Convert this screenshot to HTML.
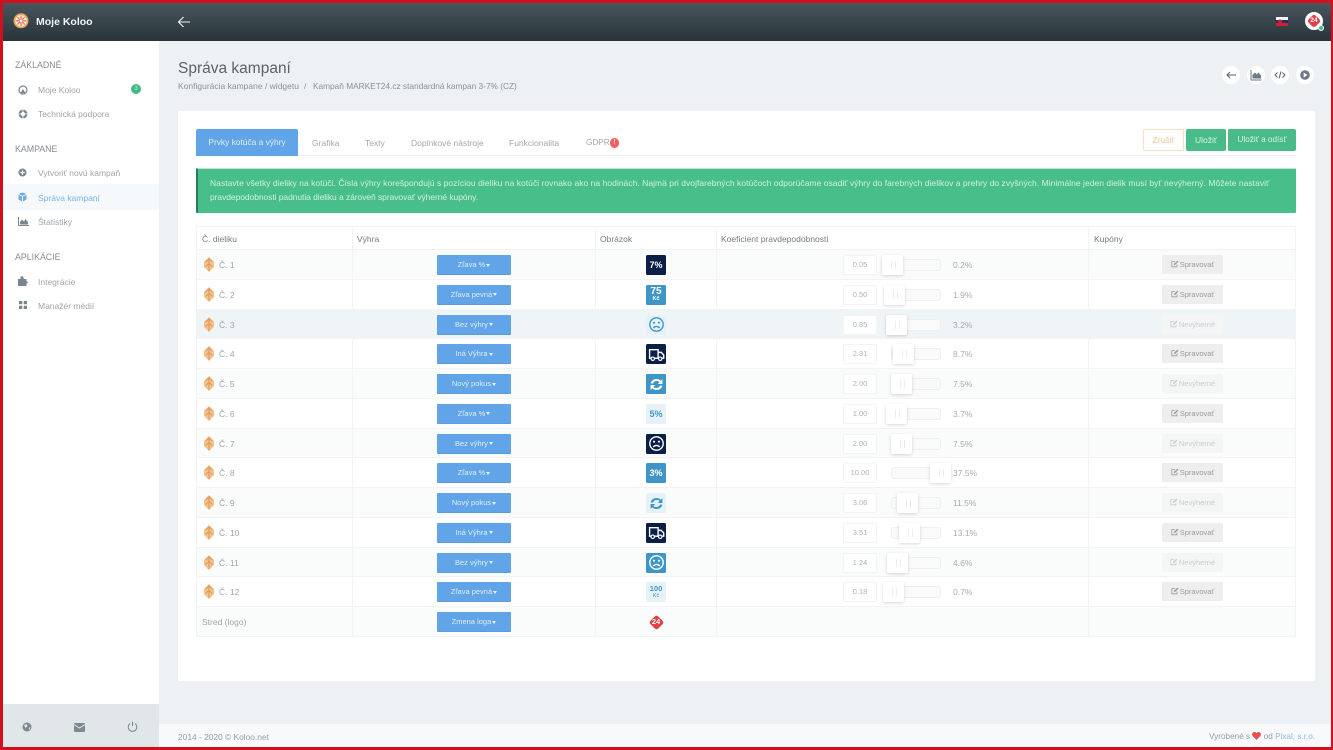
<!DOCTYPE html>
<html lang="sk"><head><meta charset="utf-8"><title>Správa kampaní</title>
<style>
*{box-sizing:border-box}
html,body{margin:0;padding:0}
body{width:1333px;height:750px;overflow:hidden;position:relative;background:#eef1f3;font-family:"Liberation Sans",sans-serif;font-size:8.5px;color:#8d9499;filter:blur(.3px)}
.a{position:absolute;white-space:nowrap}
#frame{position:absolute;left:0;top:0;width:1333px;height:750px;border:solid #d0101f;border-width:3px 2px 3px 3px;pointer-events:none;z-index:9}
#top{left:0;top:0;width:1333px;height:41px;background:linear-gradient(#4b585f,#28333a)}
#side{left:0;top:41px;width:159px;height:709px;background:#fff}
.h{left:15px;font-size:8.8px;color:#858d93;line-height:12px}
.n{left:38px;font-size:8.5px;color:#9fa5a9;line-height:12px}
.tab{top:137px;font-size:8.5px;color:#a2a8ac;line-height:12px}
.r{position:absolute;left:196px;width:1100px;height:29.75px;border-bottom:1px solid #f1f3f4;border-left:1px solid #f1f3f4;border-right:1px solid #f1f3f4}
.v{position:absolute;top:0;height:100%;width:1px;background:#f1f3f4}
.l{position:absolute;left:22px;top:9px;font-size:8.5px;line-height:12px;color:#a0a6aa;white-space:nowrap}
.w{position:absolute;left:6px;top:7px;width:12px;height:15px}
.d{position:absolute;left:240px;top:5px;width:74px;height:19px;background:#61a5e8;border-radius:1px;color:#dfeefb;font-size:7.5px;line-height:19px;text-align:center;white-space:nowrap;box-shadow:0 1px 0 #5a9bdc}
.d i{display:inline-block;border:2.5px solid transparent;border-top:3px solid #eaf3fc;border-bottom:0;vertical-align:middle;margin-left:-1px}
.im{position:absolute;left:449px;top:5px;width:20px;height:20px;border-radius:1.5px;color:#fff;text-align:center;font-weight:bold;font-size:9px;line-height:20px;white-space:nowrap}
.im svg{position:absolute;left:1.5px;top:1.5px;width:17px;height:17px}
.im b{display:block;font-size:10px;line-height:9px;padding-top:2px}
.im u{display:block;text-decoration:none;font-size:5.5px;line-height:6px}
.nv{background:#0b1e48}.bl{background:#3f96c6}.lt{background:#e6f2f8;color:#3f96c6}
.in{position:absolute;left:646px;top:5px;width:34px;height:20px;border:1px solid #f3f4f5;background:#fff;font-size:7.5px;color:#adb2b5;text-align:center;line-height:18px;overflow:hidden}
.t{position:absolute;left:694px;top:9px;width:50px;height:12px;border:1px solid #efefef;border-radius:3px;background:#fafafa}
.k{position:absolute;top:5px;width:21px;height:20px;background:#fff;border-radius:2px;box-shadow:0 1px 3px rgba(0,0,0,.16)}
.k:after{content:"";position:absolute;left:9px;top:6px;width:3px;height:8px;border-left:1px solid #ececec;border-right:1px solid #ececec}
.p{position:absolute;left:756px;top:9px;font-size:8.5px;line-height:12px;color:#a8adb0}
.s{position:absolute;left:965px;top:5px;width:61px;height:19px;background:#eeeeee;color:#979ca0;font-size:7.5px;line-height:19px;text-align:center;white-space:nowrap;border-radius:1px}
.s.o{background:#f4f5f5;color:#c8cccf}
.s svg{width:8px;height:8px;vertical-align:-1px;margin-right:1px}
.c{top:66px;width:18px;height:18px;border-radius:50%;background:#fff}
.c svg{position:absolute;left:3px;top:3px;width:12px;height:12px}
.bt{top:129px;height:22px;border-radius:2px;text-align:center;font-size:8.5px;line-height:22px;background:#48bb88;color:#d8f3e5}
.th{position:absolute;top:6px;font-size:8.5px;line-height:12px;color:#757c81;white-space:nowrap}
</style></head><body>
<svg width="0" height="0" style="position:absolute">
<defs>
<symbol id="wedge" viewBox="0 0 12 15"><path d="M6 0 11 5V10L6 15 1 10V5Z" fill="#f3c38e"/><path d="M6 1v13M2.500 5 6 2l3.500 3M2.500 9.500 6 6.500l3.500 3" stroke="#e09a5c" stroke-width="1.100" fill="none"/></symbol>
<symbol id="sad" viewBox="0 0 16 16"><circle cx="8" cy="8" r="6.300" fill="none" stroke="currentColor" stroke-width="1.300"/><circle cx="5.700" cy="6.300" r="1" fill="currentColor"/><circle cx="10.300" cy="6.300" r="1" fill="currentColor"/><path d="M5 11.300C6.500 9.300 9.500 9.300 11 11.300" fill="none" stroke="currentColor" stroke-width="1.300"/></symbol>
<symbol id="truck" viewBox="0 0 16 16"><path d="M1.500 3.500H9.500V11.500H1.500ZM9.500 6H12.500L14.800 8.500V11.500H9.500" fill="none" stroke="currentColor" stroke-width="1.300"/><circle cx="4.500" cy="12" r="1.600" fill="#0b1e48" stroke="currentColor" stroke-width="1.100"/><circle cx="11.500" cy="12" r="1.600" fill="#0b1e48" stroke="currentColor" stroke-width="1.100"/></symbol>
<symbol id="sync" viewBox="0 0 16 16"><path d="M2.500 7C3 4.500 5.300 2.800 8 2.800c1.700 0 3 .7 4 1.700L13.600 3V7.500H9.200L11 5.700C10.300 5 9.200 4.700 8 4.700 6.500 4.700 5.300 5.600 4.800 7ZM13.500 9C13 11.500 10.700 13.200 8 13.200c-1.700 0-3-.7-4-1.700L2.400 13V8.500H6.800L5 10.300C5.700 11 6.800 11.300 8 11.300c1.500 0 2.700-.9 3.200-2.300Z" fill="currentColor"/></symbol>
<symbol id="edit" viewBox="0 0 10 10"><path d="M7.500 5.500V8.500H1V2H5" fill="none" stroke="currentColor" stroke-width="1"/><path d="M3.500 6.500 4 4.500 8 .8 9.300 2 5.300 6Z" fill="currentColor"/></symbol>
</defs></svg>

<div class="a" id="top"></div>
<svg class="a" style="left:13px;top:13px" width="16" height="16" viewBox="0 0 16 16"><circle cx="8" cy="7.800" r="7.500" fill="#e9a45c"/><circle cx="8" cy="7.800" r="5.800" fill="#fbe9dc"/><path d="M8 2.500v10.600M2.700 7.800h10.600M4.300 4.100l7.400 7.400M11.700 4.100l-7.400 7.400" stroke="#e27c5e" stroke-width="1.300"/><circle cx="8" cy="7.800" r="1.300" fill="#fff"/></svg>
<div class="a" style="left:36px;top:15px;font-size:10.500px;font-weight:bold;color:#f2f4f5;line-height:14px">Moje Koloo</div>
<svg class="a" style="left:177px;top:15px" width="14" height="14" viewBox="0 0 14 14"><path d="M13 7H1.500M6.500 2 1.500 7l5 5" fill="none" stroke="#f2f4f5" stroke-width="1.100"/></svg>
<svg class="a" style="left:1276px;top:17px" width="12" height="9" viewBox="0 0 12 9"><rect width="12" height="3" fill="#f4f4f4"/><rect y="3" width="12" height="3" fill="#1c2f7a"/><rect y="6" width="12" height="3" fill="#d21f2c"/><circle cx="4" cy="4.500" r="2" fill="#d21f2c"/></svg>
<div class="a" style="left:1305px;top:12px;width:18px;height:18px;border-radius:50%;background:#fff"></div>
<div class="a" style="left:1309px;top:16px;width:10px;height:10px;border-radius:2.500px;background:#de4246;transform:rotate(45deg)"></div>
<div class="a" style="left:1305px;top:16px;width:18px;text-align:center;font-size:6.500px;font-weight:bold;color:#fff;line-height:10px">24</div>
<div class="a" style="left:1318px;top:25px;width:6px;height:6px;border-radius:50%;background:#48bb88;border:1px solid #fff"></div>

<div class="a" id="side"></div>
<div class="a" style="left:3px;top:184px;width:156px;height:26px;background:#f6f9fb"></div>
<div class="a h" style="top:59px">ZÁKLADNÉ</div>
<div class="a h" style="top:143px">KAMPANE</div>
<div class="a h" style="top:251px">APLIKÁCIE</div>
<div class="a n" style="top:84px">Moje Koloo</div>
<div class="a n" style="top:108px">Technická podpora</div>
<div class="a n" style="top:167px">Vytvoriť novú kampaň</div>
<div class="a n" style="top:192px;color:#7eb2e6">Správa kampaní</div>
<div class="a n" style="top:216px">Štatistiky</div>
<div class="a n" style="top:276px">Integrácie</div>
<div class="a n" style="top:300px">Manažér médií</div>
<div class="a" style="left:131px;top:84px;width:10px;height:10px;border-radius:50%;background:#3fba84;color:#b8ecd2;font-size:6.500px;line-height:10px;text-align:center">3</div>
<svg class="a" style="left:18px;top:85px" width="10" height="10" viewBox="0 0 10 10"><circle cx="5" cy="5" r="4" fill="none" stroke="#7a868e" stroke-width="1.200"/><path d="M2.500 8 5 4 7.500 8Z" fill="#7a868e"/></svg>
<svg class="a" style="left:18px;top:109px" width="10" height="10" viewBox="0 0 10 10"><circle cx="5" cy="5" r="4.500" fill="#7a868e"/><circle cx="5" cy="5" r="2" fill="#fff"/><path d="M5 0v10M0 5h10" stroke="#fff" stroke-width=".8"/></svg>
<svg class="a" style="left:18px;top:168px" width="9" height="9" viewBox="0 0 9 9"><circle cx="4.500" cy="4.500" r="4" fill="#7a868e"/><path d="M2.300 4.500h4.400M4.500 2.300v4.400" stroke="#fff" stroke-width="1.200"/></svg>
<svg class="a" style="left:18px;top:192px" width="9" height="10" viewBox="0 0 9 10"><path d="M4.500 .5 8.500 2 4.500 3.700 .5 2Z" fill="#6fa9e2"/><path d="M.5 3 4 4.500V9.500L.5 7.500ZM8.500 3 5 4.500V9.500L8.500 7.500Z" fill="#6fa9e2"/></svg>
<svg class="a" style="left:18px;top:217px" width="11" height="9" viewBox="0 0 11 9"><path d="M.5 0V8.500H11" fill="none" stroke="#7a868e"/><path d="M2 7.500V5L4 2.500 6 4.500 7.500 2 10 5V7.500Z" fill="#7a868e"/></svg>
<svg class="a" style="left:18px;top:276px" width="10" height="10" viewBox="0 0 10 10"><path d="M0 3H2.500C2 1 3 .3 4 .3S6 1 5.500 3H8.500V5.500C10.500 5 10 8 8.500 7.200V10H0Z" fill="#7a868e"/></svg>
<svg class="a" style="left:19px;top:301px" width="8" height="8" viewBox="0 0 8 8"><path d="M0 0h3.300v3.300H0zM4.700 0H8v3.300H4.700zM0 4.700h3.300V8H0zM4.700 4.700H8V8H4.700z" fill="#7a868e"/></svg>
<div class="a" style="left:3px;top:704px;width:156px;height:44px;background:#e1e6e9"></div>
<svg class="a" style="left:22px;top:722px" width="10" height="10" viewBox="0 0 10 10"><circle cx="5" cy="5" r="4.500" fill="#7d8a94"/><path d="M2 3 4.500 2 5.500 4 3.500 6ZM6.500 6 8.500 5 7.500 8Z" fill="#e1e6e9"/></svg>
<svg class="a" style="left:74px;top:723px" width="11" height="9" viewBox="0 0 11 9"><rect width="11" height="9" rx="1" fill="#7d8a94"/><path d="M0 1.500 5.500 5 11 1.500" fill="none" stroke="#e1e6e9"/></svg>
<svg class="a" style="left:127px;top:721px" width="11" height="11" viewBox="0 0 11 11"><path d="M3 2.500a4.300 4.300 0 1 0 5 0" fill="none" stroke="#7d8a94" stroke-width="1"/><path d="M5.500 .5V5" stroke="#7d8a94" stroke-width="1"/></svg>

<div class="a" style="left:178px;top:59px;font-size:15.500px;line-height:20px;color:#5a6369">Správa kampaní</div>
<div class="a" style="left:178px;top:80px;font-size:8.500px;line-height:12px;color:#8a9298">Konfigurácia kampane / widgetu</div>
<div class="a" style="left:304px;top:80px;font-size:8.500px;line-height:12px;color:#8a9298">/</div>
<div class="a" style="left:313px;top:80px;font-size:8.300px;line-height:12px;color:#8a9298">Kampaň MARKET24.cz standardná kampan 3-7% (CZ)</div>
<div class="a c" style="left:1222px"><svg viewBox="0 0 12 12"><path d="M11 6H2M5 3 2 6l3 3" fill="none" stroke="#56626a" stroke-width="1"/></svg></div>
<div class="a c" style="left:1247px"><svg viewBox="0 0 12 12"><path d="M1 1V11H11.500" fill="none" stroke="#6e7a83"/><path d="M2.500 9.500V6L5 3.500 7 5.500 8.500 3.500 11 6.500V9.500Z" fill="#6e7a83"/></svg></div>
<div class="a c" style="left:1271px"><svg viewBox="0 0 12 12"><path d="M3.500 3.500 1 6l2.500 2.500M8.500 3.500 11 6 8.500 8.500M7 2.500 5 9.500" fill="none" stroke="#56626a" stroke-width="1"/></svg></div>
<div class="a c" style="left:1296px"><svg viewBox="0 0 12 12"><circle cx="6" cy="6" r="4.800" fill="#6e7a83"/><path d="M4.700 3.500 8.500 6 4.700 8.500Z" fill="#fff"/></svg></div>

<div class="a" style="left:178px;top:111px;width:1137px;height:570px;background:#fff"></div>
<div class="a" style="left:196px;top:155px;width:1100px;height:1px;background:#eef0f1"></div>
<div class="a" style="left:196px;top:129px;width:102px;height:27px;background:#61a5e8;border-radius:2px 2px 0 0;color:#e0eefa;font-size:8.400px;line-height:26px;text-align:center">Prvky kotúča a výhry</div>
<div class="a tab" style="left:312px">Grafika</div>
<div class="a tab" style="left:365px">Texty</div>
<div class="a tab" style="left:411px">Doplnkové nástroje</div>
<div class="a tab" style="left:509px">Funkcionalita</div>
<div class="a tab" style="left:586px;font-size:8.200px">GDPR</div>
<div class="a" style="left:610px;top:138px;width:9px;height:10px;border-radius:5px;background:#f0625f;color:#fff;font-size:7px;line-height:10px;text-align:center">!</div>
<div class="a bt" style="left:1143px;width:41px;background:#fff;border:1px solid #f6dfc4;color:#f0c49c;line-height:20px">Zrušiť</div>
<div class="a bt" style="left:1186px;width:40px">Uložiť</div>
<div class="a bt" style="left:1228px;width:68px;font-size:8.200px">Uložiť a odísť</div>

<div class="a" style="left:196px;top:168px;width:1100px;height:45px;background:#48bf8a;border-left:2px solid #2b7a58;border-top:1px solid #bfe8d4;border-radius:1px;color:#d2f0e0;font-size:8.500px;line-height:13.500px;padding:8px 0 0 12px"><span style="letter-spacing:.036px">Nastavte všetky dieliky na kotúči. Čísla výhry korešpondujú s pozíciou dieliku na kotúči rovnako ako na hodinách. Najmä pri dvojfarebných kotúčoch odporúčame osadiť výhry do farebných dielikov a prehry do zvyšných. Minimálne jeden dielik musí byť nevýherný. Môžete nastaviť</span><br><span style="letter-spacing:-.07px">pravdepodobnosti padnutia dieliku a zároveň spravovať výherné kupóny.</span></div>

<div class="r" style="top:226px;height:24px;border-top:1px solid #f1f3f4"><span class="v" style="left:155px"></span><span class="v" style="left:398px"></span><span class="v" style="left:519px"></span><span class="v" style="left:891px"></span>
<span class="th" style="left:5px">Č. dieliku</span><span class="th" style="left:160px">Výhra</span><span class="th" style="left:403px">Obrázok</span><span class="th" style="left:524px">Koeficient pravdepodobnosti</span><span class="th" style="left:897px">Kupóny</span></div>

<div class="r" style="top:250px;background:#fafbfb"><span class="v" style="left:155px"></span><span class="v" style="left:398px"></span><span class="v" style="left:519px"></span><span class="v" style="left:891px"></span>
<svg class="w"><use href="#wedge"/></svg><span class="l">Č. 1</span><span class="d">Zľava % <i></i></span><span class="im nv">7%</span><span class="in">0.05</span><span class="t"></span><span class="k" style="left:685px"></span><span class="p">0.2%</span><span class="s"><svg><use href="#edit"/></svg>Spravovať</span></div>

<div class="r" style="top:279.750px;background:#fff"><span class="v" style="left:155px"></span><span class="v" style="left:398px"></span><span class="v" style="left:519px"></span><span class="v" style="left:891px"></span>
<svg class="w"><use href="#wedge"/></svg><span class="l">Č. 2</span><span class="d">Zľava pevná <i></i></span><span class="im bl"><b>75</b><u>Kč</u></span><span class="in">0.50</span><span class="t"></span><span class="k" style="left:687px"></span><span class="p">1.9%</span><span class="s"><svg><use href="#edit"/></svg>Spravovať</span></div>

<div class="r" style="top:309.500px;background:#eff4f7"><span class="v" style="left:155px"></span><span class="v" style="left:398px"></span><span class="v" style="left:519px"></span><span class="v" style="left:891px"></span>
<svg class="w"><use href="#wedge"/></svg><span class="l">Č. 3</span><span class="d">Bez výhry <i></i></span><span class="im lt"><svg><use href="#sad"/></svg></span><span class="in">0.85</span><span class="t"></span><span class="k" style="left:689px"></span><span class="p">3.2%</span><span class="s o"><svg><use href="#edit"/></svg>Nevýherné</span></div>

<div class="r" style="top:339.250px;background:#fff"><span class="v" style="left:155px"></span><span class="v" style="left:398px"></span><span class="v" style="left:519px"></span><span class="v" style="left:891px"></span>
<svg class="w"><use href="#wedge"/></svg><span class="l">Č. 4</span><span class="d">Iná Výhra <i></i></span><span class="im nv"><svg><use href="#truck"/></svg></span><span class="in">2.31</span><span class="t"></span><span class="k" style="left:696px"></span><span class="p">8.7%</span><span class="s"><svg><use href="#edit"/></svg>Spravovať</span></div>

<div class="r" style="top:369px;background:#fafbfb"><span class="v" style="left:155px"></span><span class="v" style="left:398px"></span><span class="v" style="left:519px"></span><span class="v" style="left:891px"></span>
<svg class="w"><use href="#wedge"/></svg><span class="l">Č. 5</span><span class="d">Nový pokus <i></i></span><span class="im bl"><svg><use href="#sync"/></svg></span><span class="in">2.00</span><span class="t"></span><span class="k" style="left:694px"></span><span class="p">7.5%</span><span class="s o"><svg><use href="#edit"/></svg>Nevýherné</span></div>

<div class="r" style="top:398.750px;background:#fff"><span class="v" style="left:155px"></span><span class="v" style="left:398px"></span><span class="v" style="left:519px"></span><span class="v" style="left:891px"></span>
<svg class="w"><use href="#wedge"/></svg><span class="l">Č. 6</span><span class="d">Zľava % <i></i></span><span class="im lt">5%</span><span class="in">1.00</span><span class="t"></span><span class="k" style="left:689px"></span><span class="p">3.7%</span><span class="s"><svg><use href="#edit"/></svg>Spravovať</span></div>

<div class="r" style="top:428.500px;background:#fafbfb"><span class="v" style="left:155px"></span><span class="v" style="left:398px"></span><span class="v" style="left:519px"></span><span class="v" style="left:891px"></span>
<svg class="w"><use href="#wedge"/></svg><span class="l">Č. 7</span><span class="d">Bez výhry <i></i></span><span class="im nv"><svg><use href="#sad"/></svg></span><span class="in">2.00</span><span class="t"></span><span class="k" style="left:694px"></span><span class="p">7.5%</span><span class="s o"><svg><use href="#edit"/></svg>Nevýherné</span></div>

<div class="r" style="top:458.250px;background:#fff"><span class="v" style="left:155px"></span><span class="v" style="left:398px"></span><span class="v" style="left:519px"></span><span class="v" style="left:891px"></span>
<svg class="w"><use href="#wedge"/></svg><span class="l">Č. 8</span><span class="d">Zľava % <i></i></span><span class="im bl">3%</span><span class="in">10.00</span><span class="t"></span><span class="k" style="left:733px"></span><span class="p">37.5%</span><span class="s"><svg><use href="#edit"/></svg>Spravovať</span></div>

<div class="r" style="top:488px;background:#fafbfb"><span class="v" style="left:155px"></span><span class="v" style="left:398px"></span><span class="v" style="left:519px"></span><span class="v" style="left:891px"></span>
<svg class="w"><use href="#wedge"/></svg><span class="l">Č. 9</span><span class="d">Nový pokus <i></i></span><span class="im lt"><svg><use href="#sync"/></svg></span><span class="in">3.06</span><span class="t"></span><span class="k" style="left:700px"></span><span class="p">11.5%</span><span class="s o"><svg><use href="#edit"/></svg>Nevýherné</span></div>

<div class="r" style="top:517.750px;background:#fff"><span class="v" style="left:155px"></span><span class="v" style="left:398px"></span><span class="v" style="left:519px"></span><span class="v" style="left:891px"></span>
<svg class="w"><use href="#wedge"/></svg><span class="l">Č. 10</span><span class="d">Iná Výhra <i></i></span><span class="im nv"><svg><use href="#truck"/></svg></span><span class="in">3.51</span><span class="t"></span><span class="k" style="left:702px"></span><span class="p">13.1%</span><span class="s"><svg><use href="#edit"/></svg>Spravovať</span></div>

<div class="r" style="top:547.500px;background:#fafbfb"><span class="v" style="left:155px"></span><span class="v" style="left:398px"></span><span class="v" style="left:519px"></span><span class="v" style="left:891px"></span>
<svg class="w"><use href="#wedge"/></svg><span class="l">Č. 11</span><span class="d">Bez výhry <i></i></span><span class="im bl"><svg><use href="#sad"/></svg></span><span class="in">1.24</span><span class="t"></span><span class="k" style="left:690px"></span><span class="p">4.6%</span><span class="s o"><svg><use href="#edit"/></svg>Nevýherné</span></div>

<div class="r" style="top:577.250px;background:#fff"><span class="v" style="left:155px"></span><span class="v" style="left:398px"></span><span class="v" style="left:519px"></span><span class="v" style="left:891px"></span>
<svg class="w"><use href="#wedge"/></svg><span class="l">Č. 12</span><span class="d">Zľava pevná <i></i></span><span class="im lt" style="font-weight:normal"><b style="font-size:7.500px;line-height:8px;padding-top:3px">100</b><u>Kč</u></span><span class="in">0.18</span><span class="t"></span><span class="k" style="left:686px"></span><span class="p">0.7%</span><span class="s"><svg><use href="#edit"/></svg>Spravovať</span></div>

<div class="r" style="top:607px;background:#fafbfb"><span class="v" style="left:155px"></span><span class="v" style="left:398px"></span><span class="v" style="left:519px"></span><span class="v" style="left:891px"></span>
<span class="l" style="left:5px">Stred (logo)</span><span class="d">Zmena loga <i></i></span>
<span style="position:absolute;left:453.500px;top:9.500px;width:11px;height:11px;background:#df4347;border-radius:2.500px;transform:rotate(45deg)"></span><span style="position:absolute;left:449px;top:9px;width:20px;text-align:center;color:#fff;font-size:7.500px;font-weight:bold;line-height:12px">24</span></div>

<div class="a" style="left:159px;top:724px;width:1174px;height:26px;background:#f8f9fa"></div>
<div class="a" style="left:178px;top:731px;font-size:8.400px;line-height:12px;color:#979da2">2014 - 2020 © Koloo.net</div>
<div class="a" style="left:1209px;top:731px;font-size:8.200px;line-height:12px;color:#979da2">Vyrobené s <svg width="9" height="8" viewBox="0 0 9 8" style="vertical-align:-1px"><path d="M4.500 8 .6 4C-.8 1.800 1 0 2.500 0 3.400 0 4.100.5 4.500 1.200 4.900.5 5.600 0 6.500 0 8 0 9.800 1.800 8.400 4Z" fill="#e9504f"/></svg> od <span style="color:#8db8e4">Pixal, s.r.o.</span></div>
<div id="frame"></div>
</body></html>
